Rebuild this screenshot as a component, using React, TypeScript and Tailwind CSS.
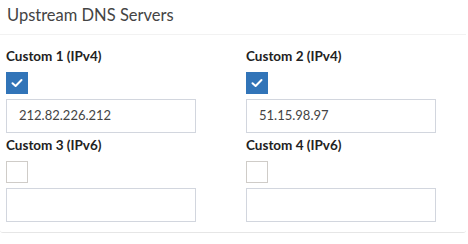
import React from "react";

const Check = ({ checked }: { checked: boolean }) =>
  checked ? (
    <div className="w-[22px] h-[22px] bg-[#3174b8] flex items-center justify-center">
      <svg width="12" height="10" viewBox="0 0 12 10">
        <path d="M1.5 5.2 L4.6 8 L10.5 2" fill="none" stroke="#ffffff" strokeWidth="2" strokeLinecap="round" strokeLinejoin="round" />
      </svg>
    </div>
  ) : (
    <div className="w-[22px] h-[22px] border border-[#cfccc8] bg-white" />
  );

const Field = ({ label, checked, value }: { label: string; checked: boolean; value: string }) => (
  <div className="flex flex-col w-[190px]">
    <div className="h-[20px] leading-[20px] text-[13.5px] font-bold text-[#222]">{label}</div>
    <div className="mt-[6px]">
      <Check checked={checked} />
    </div>
    <div className="mt-[5px] h-[34px] border border-[#d2d6de] px-[12px] flex items-center text-[13px] text-[#444]">
      {value}
    </div>
  </div>
);

export default function App() {
  return (
    <div className="w-[468px] h-[244px] bg-white" style={{ fontFamily: "Lato, 'Liberation Sans', sans-serif" }}>
      <div className="w-[466px] border-b border-[#e6e6e6] rounded-b-[3px]">
        <div className="h-[35px] border-b border-[#f2f2f2] pl-[7px] pt-[3px]">
          <div className="text-[16.5px] leading-[24px] text-[#444]">Upstream DNS Servers</div>
        </div>
        <div className="pl-[6px] pt-[11px] pb-[10px] grid grid-cols-[240px_220px]">
          <Field label="Custom 1 (IPv4)" checked value="212.82.226.212" />
          <Field label="Custom 2 (IPv4)" checked value="51.15.98.97" />
          <div className="mt-[2px]">
            <Field label="Custom 3 (IPv6)" checked={false} value="" />
          </div>
          <div className="mt-[2px]">
            <Field label="Custom 4 (IPv6)" checked={false} value="" />
          </div>
        </div>
      </div>
    </div>
  );
}
